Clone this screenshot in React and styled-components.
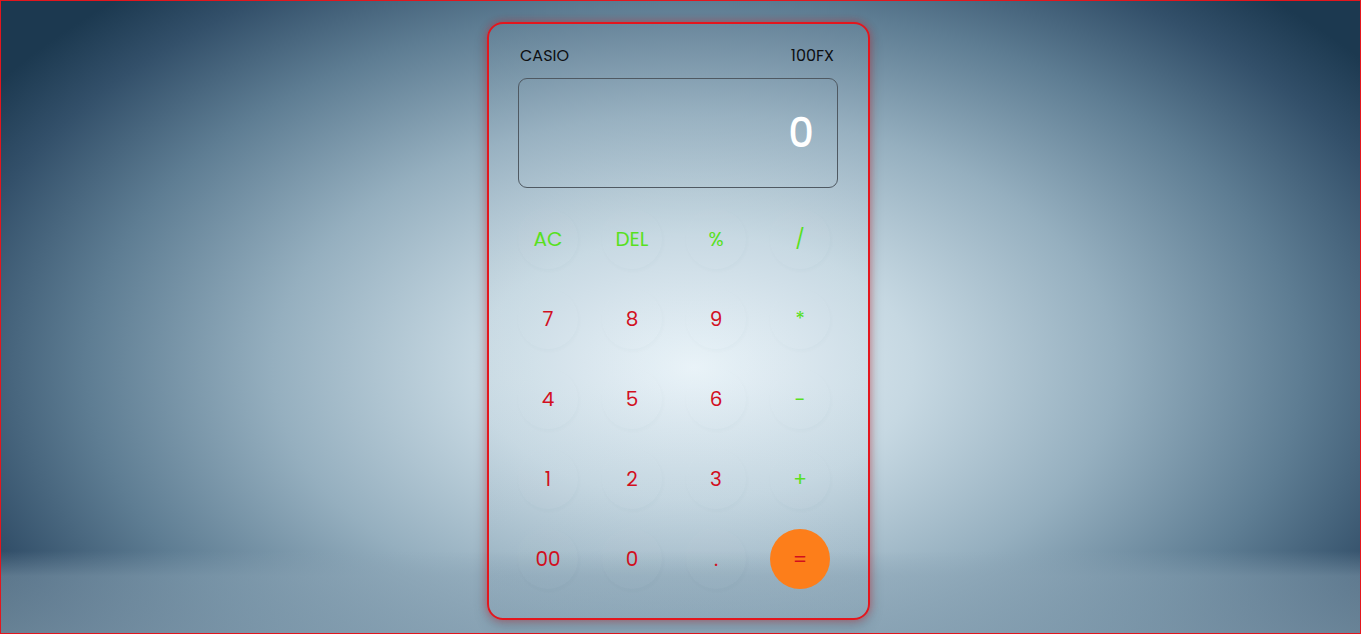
import React, { useState } from "react";
import styled, { createGlobalStyle } from "styled-components";

const GlobalStyle = createGlobalStyle`
  * { box-sizing: border-box; }
  html, body { margin: 0; padding: 0; height: 100%; }
  body { font-family: "Poppins", "Inter", "Noto Sans", sans-serif; }
`;

const Page = styled.main`
  height: 100vh;
  border: 1px solid #e3161d;
  display: flex;
  justify-content: center;
  align-items: flex-start;
  padding-top: 21px;
  background:
    linear-gradient(to bottom, rgba(140, 165, 182, 0) 87%, rgba(140, 165, 182, 0.5) 91%, rgba(140, 165, 182, 0.65) 100%),
    radial-gradient(ellipse 62% 80% at 51% 58%, #e8f2f8 0%, #c6d8e2 26%, #95afbf 50%, #5e7d93 72%, #33506a 89%, #1c3950 100%);
`;

const Card = styled.section`
  width: 383px;
  height: 598px;
  margin-right: 4px;
  border: 2px solid #e3161d;
  border-radius: 16px;
  padding: 20px 30px 29px 29px;
  background: linear-gradient(to bottom, rgba(255, 255, 255, 0.02), rgba(255, 255, 255, 0.05) 60%, rgba(120, 150, 170, 0.08));
  box-shadow: 0 0 8px rgba(227, 22, 29, 0.45), 0 6px 14px rgba(30, 50, 70, 0.22);
  display: flex;
  flex-direction: column;
`;

const Brand = styled.header`
  display: flex;
  justify-content: space-between;
  padding: 0 4px 0 2px;
  font-size: 16px;
  color: #0d0f12;
  line-height: 24px;
`;

const Display = styled.div`
  margin-top: 10px;
  height: 110px;
  border: 1px solid #4f5962;
  border-radius: 9px;
  display: flex;
  align-items: center;
  justify-content: flex-end;
  padding-right: 23px;
  color: #ffffff;
  font-size: 40px;
  font-weight: 500;
`;

const Keys = styled.div`
  margin-top: 21px;
  display: grid;
  grid-template-columns: repeat(4, 60px);
  grid-auto-rows: 60px;
  column-gap: 24px;
  row-gap: 20px;
`;

const Key = styled.button`
  width: 60px;
  height: 60px;
  border: none;
  border-radius: 50%;
  font-family: inherit;
  font-size: 20px;
  color: ${(p) => (p.$op ? "#58e01f" : "#d20f1e")};
  background: ${(p) => (p.$accent ? "#fd7e1a" : "rgba(255, 255, 255, 0.015)")};
  box-shadow: ${(p) =>
    p.$accent
      ? "none"
      : "1px 2px 4px rgba(40, 70, 90, 0.025), -1px -1px 3px rgba(255, 255, 255, 0.03)"};
  display: flex;
  align-items: center;
  justify-content: center;
  cursor: pointer;
  padding: 0;
`;

const rows = [
  [
    { k: "AC", op: true },
    { k: "DEL", op: true },
    { k: "%", op: true },
    { k: "/", op: true },
  ],
  [{ k: "7" }, { k: "8" }, { k: "9" }, { k: "*", op: true }],
  [{ k: "4" }, { k: "5" }, { k: "6" }, { k: "-", op: true }],
  [{ k: "1" }, { k: "2" }, { k: "3" }, { k: "+", op: true }],
  [{ k: "00" }, { k: "0" }, { k: "." }, { k: "=", accent: true }],
];

export default function App() {
  const [value] = useState("0");
  return (
    <>
      <GlobalStyle />
      <Page>
        <Card>
          <Brand>
            <span>CASIO</span>
            <span>100FX</span>
          </Brand>
          <Display>{value}</Display>
          <Keys>
            {rows.flat().map((b) => (
              <Key key={b.k} $op={b.op} $accent={b.accent}>
                {b.k}
              </Key>
            ))}
          </Keys>
        </Card>
      </Page>
    </>
  );
}
